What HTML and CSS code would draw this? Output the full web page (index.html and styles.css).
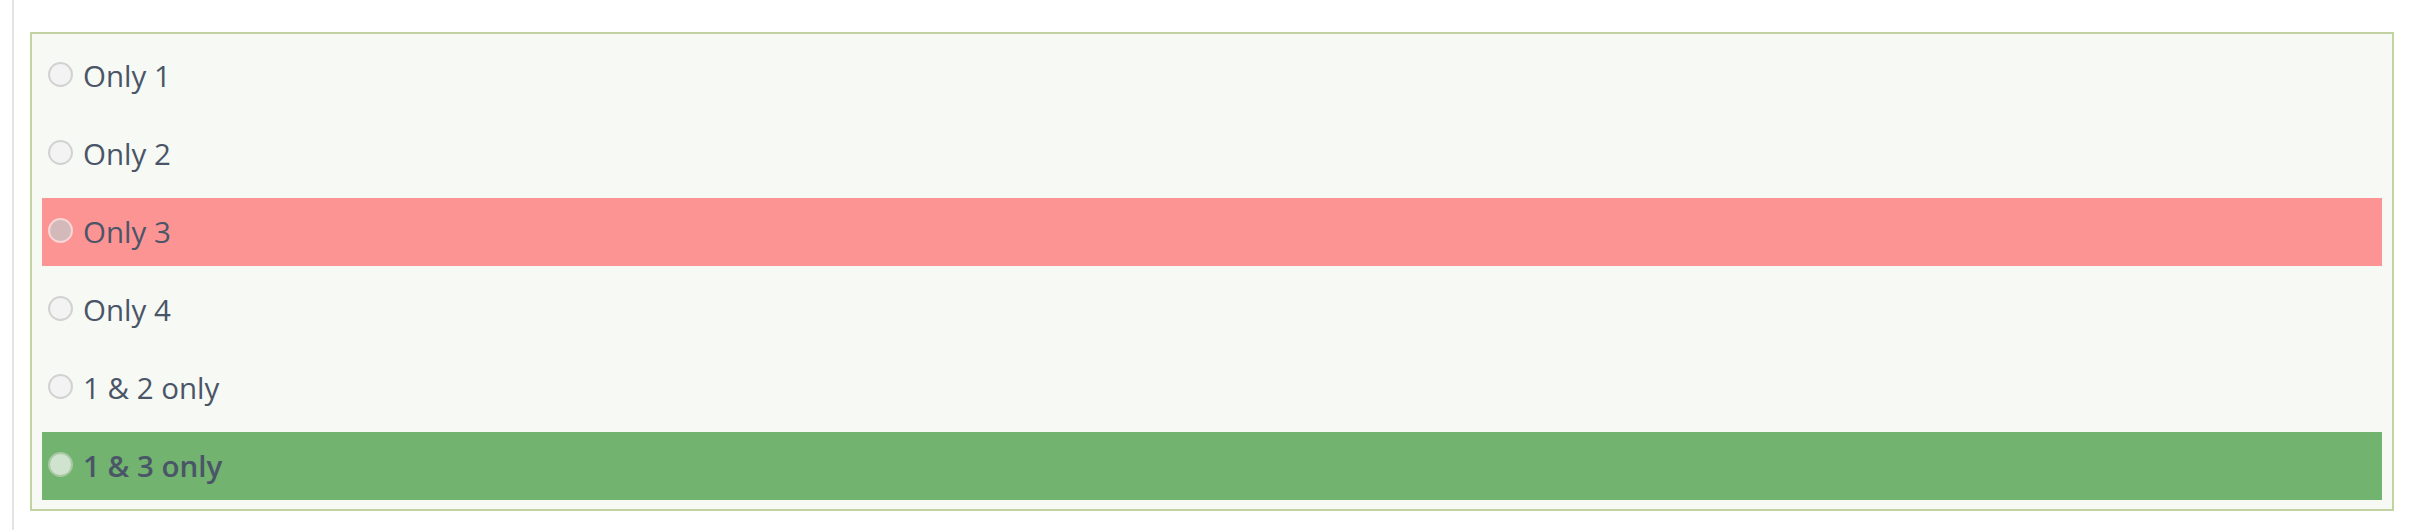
FILE: index.html
```html
<!DOCTYPE html>
<html>
<head>
<meta charset="utf-8">
<link rel="stylesheet" href="styles.css">
</head>
<body>
<div class="page">
  <div class="options">
    <div class="option"><span class="radio"></span><span class="label">Only 1</span></div>
    <div class="option"><span class="radio"></span><span class="label">Only 2</span></div>
    <div class="option wrong"><span class="radio"></span><span class="label">Only 3</span></div>
    <div class="option"><span class="radio"></span><span class="label">Only 4</span></div>
    <div class="option"><span class="radio"></span><span class="label">1 &amp; 2 only</span></div>
    <div class="option right"><span class="radio"></span><span class="label">1 &amp; 3 only</span></div>
  </div>
</div>
</body>
</html>
```
FILE: styles.css
```css
html, body {
  margin: 0;
  padding: 0;
  background: #ffffff;
}
body {
  font-family: "Open Sans", Lato, sans-serif;
  color: #4a5568;
}
.page {
  margin-left: 12px;
  border-left: 2px solid #e4e4e4;
  height: 530px;
  box-sizing: border-box;
  padding: 32px 16px 0 16px;
}
.options {
  width: 2364px;
  box-sizing: border-box;
  border: 2px solid #c2d2a2;
  background: #f7f9f4;
  padding: 8px 10px 9px 10px;
  display: flex;
  flex-direction: column;
  gap: 10px;
}
.option {
  height: 68px;
  display: flex;
  align-items: center;
  padding-left: 6px;
  box-sizing: border-box;
}
.radio {
  width: 21px;
  height: 21px;
  border-radius: 50%;
  border: 2px solid #d2d2d2;
  background: #f3f3f3;
  flex: none;
  margin-right: 10px;
  margin-bottom: 3px;
}
.label {
  font-size: 29.5px;
  line-height: 1;
}
.wrong {
  background: #fd9494;
}
.wrong .radio {
  border-color: #f6d6d6;
  background: #d3b9b9;
}
.right {
  background: #71b36f;
}
.right .radio {
  border-color: #a9c9a4;
  background: #d0e3cf;
}
.right .label {
  font-weight: 600;
}
```
